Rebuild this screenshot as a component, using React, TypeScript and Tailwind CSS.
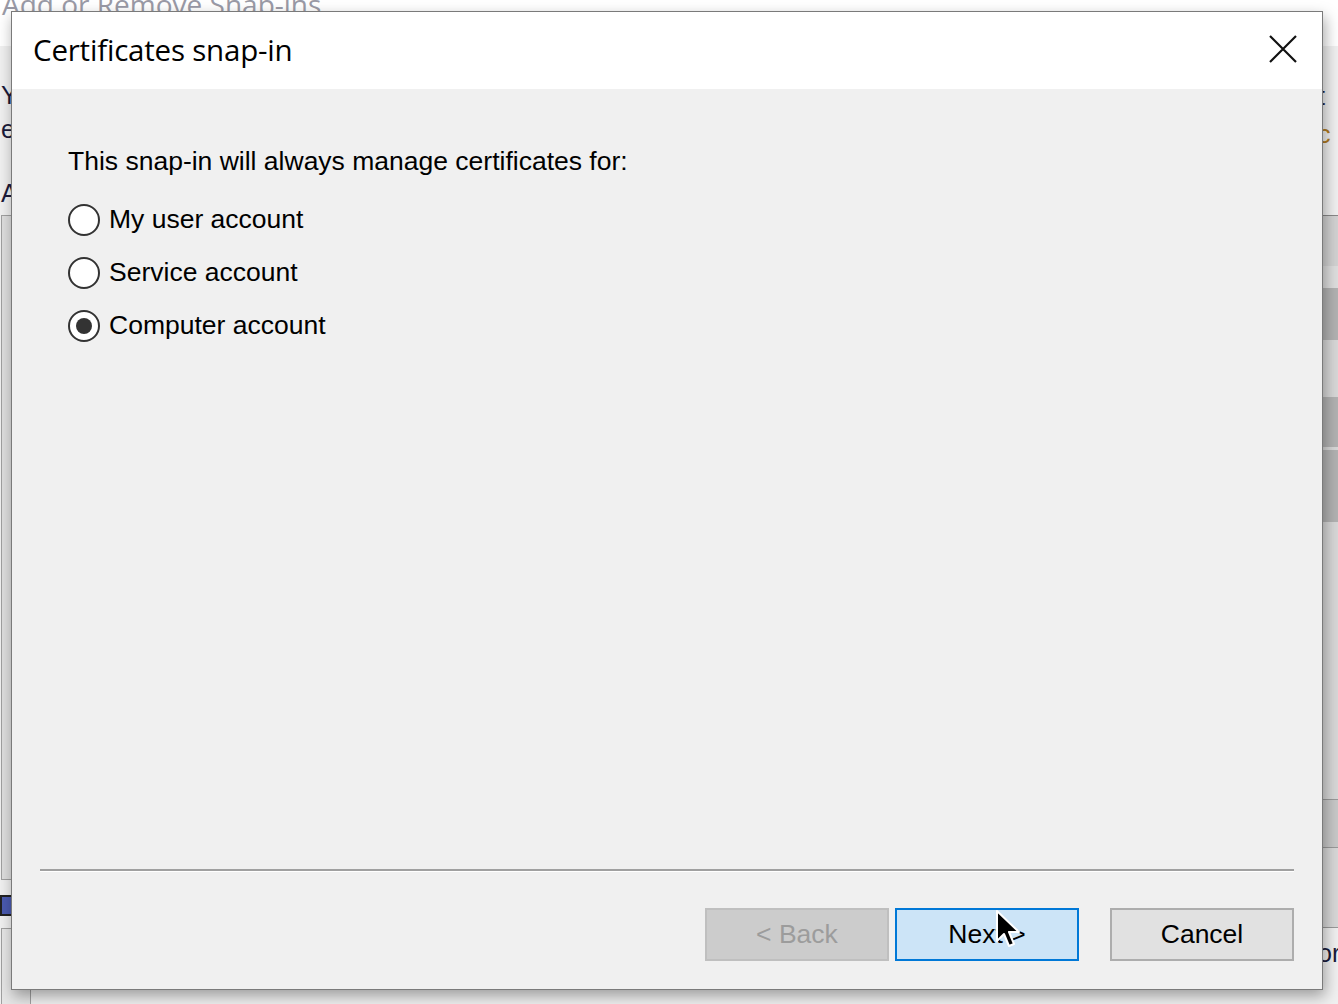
import React, { useState } from 'react';

const uiFont = { fontFamily: '"Liberation Sans", Arial, sans-serif' };
const titleFont = { fontFamily: '"Open Sans", "Noto Sans", sans-serif' };

type RadioProps = { label: string; checked: boolean; onSelect: () => void };

const Radio: React.FC<RadioProps> = ({ label, checked, onSelect }) => (
  <label className="flex items-center h-[53px] cursor-default" onClick={onSelect}>
    <span className="w-[32px] h-[32px] rounded-full border-2 border-[#333] bg-white flex items-center justify-center">
      {checked && <span className="w-[16px] h-[16px] rounded-full bg-[#333]" />}
    </span>
    <span className="ml-[9px] text-[26.5px] text-black">{label}</span>
  </label>
);

const App: React.FC = () => {
  const [choice, setChoice] = useState('computer');

  return (
    <div className="relative w-[1338px] h-[1004px] overflow-hidden bg-[#f0f0f0]" style={uiFont}>
      {/* Background window: Add or Remove Snap-ins */}
      <div className="absolute inset-0 flex flex-col">
        <div className="h-[46px] bg-white relative">
          <div className="absolute left-[2px] top-[-17px] text-[28px] text-[#9a9aa6]" style={titleFont}>
            Add or Remove Snap-ins
          </div>
        </div>
        <div className="flex-1 bg-[#f0f0f0]" />
      </div>
      <div className="absolute left-[1px] top-[78px] text-[25px] text-[#1a1a3a] leading-[34px]">
        <div>Y</div>
        <div>e</div>
      </div>
      <div className="absolute left-[1px] top-[175px] text-[25px] text-[#1a1a3a]">A</div>
      <div className="absolute left-[1px] top-[215px] w-[30px] h-[665px] border border-[#a0a0a0] bg-[#dedede]" />
      <div className="absolute left-[0px] top-[895px] w-[30px] h-[21px] border-2 border-[#222] bg-[#4a5ab0]" />
      <div className="absolute left-[1px] top-[928px] w-[30px] h-[80px] border border-[#a0a0a0] bg-[#e6e6e6]" />

      <div className="absolute left-[1318px] top-[78px] text-[25px] text-[#1a1a3a]">
        t <span className="text-[#b07a20]">c</span>
      </div>
      <div className="absolute left-[1318px] top-[215px] w-[40px] h-[713px] border-t border-[#888] flex flex-col">
        <div className="h-[50px] bg-[#d2d2d2]" />
        <div className="h-[22px] bg-[#dedede]" />
        <div className="h-[52px] bg-[#b2b2b2]" />
        <div className="h-[57px] bg-[#d8d8d8]" />
        <div className="h-[50px] bg-[#b2b2b2]" />
        <div className="h-[3px] bg-[#d8d8d8]" />
        <div className="h-[72px] bg-[#b2b2b2]" />
        <div className="h-[278px] bg-[#d8d8d8] border-b border-[#999]" />
        <div className="h-[48px] bg-[#c8c8c8] border-b border-[#999]" />
        <div className="flex-1 bg-[#d8d8d8] border-b border-[#999]" />
      </div>
      <div className="absolute left-[1318px] top-[935px] text-[25px] text-[#1a1a3a]">or</div>

      {/* Dialog */}
      <div className="absolute left-[11px] top-[11px] w-[1312px] h-[979px] border border-[#7a7a7a] flex flex-col shadow-[2px_6px_14px_rgba(0,0,0,0.35)]">
        <div className="h-[77px] bg-white flex items-center justify-between pl-[21px] pr-[25px]">
          <span className="text-[29.5px] text-black tracking-[-0.2px]" style={titleFont}>
            Certificates snap-in
          </span>
          <svg width="28" height="28" viewBox="0 0 28 28" className="mt-[-4px]">
            <path d="M1 1 L27 27 M27 1 L1 27" stroke="#111" strokeWidth="2.2" fill="none" />
          </svg>
        </div>

        <div className="flex-1 bg-[#f0f0f0] flex flex-col px-[28px] pb-[28px]">
          <div className="flex-1 flex flex-col pl-[28px] pt-[56px]">
            <div className="text-[26.5px] text-black leading-[32px] mb-[16px]">
              This snap-in will always manage certificates for:
            </div>
            <Radio label="My user account" checked={choice === 'user'} onSelect={() => setChoice('user')} />
            <Radio label="Service account" checked={choice === 'service'} onSelect={() => setChoice('service')} />
            <Radio label="Computer account" checked={choice === 'computer'} onSelect={() => setChoice('computer')} />
          </div>

          <div className="h-[2px] bg-[#a0a0a0] border-b border-white box-content" />

          <div className="flex justify-end mt-[36px]">
            <button className="w-[184px] h-[53px] bg-[#cccccc] border-2 border-[#bfbfbf] text-[26.5px] text-[#9c9c9c]">
              &lt; Back
            </button>
            <button className="relative w-[184px] h-[53px] ml-[6px] bg-[#cce4f7] border-2 border-[#0078d7] text-[26.5px] text-black">
              Next &gt;
              <svg className="absolute left-[98px] top-[-1px]" width="26" height="40" viewBox="0 0 13 20">
                <path d="M1 1 L1 16 L4.5 12.5 L7 18.5 L9.5 17.5 L7 11.5 L12 11.5 Z" fill="#000" stroke="#fff" strokeWidth="1" strokeLinejoin="round" />
              </svg>
            </button>
            <button className="w-[184px] h-[53px] ml-[31px] bg-[#e1e1e1] border-2 border-[#adadad] text-[26.5px] text-black">
              Cancel
            </button>
          </div>
        </div>
      </div>
    </div>
  );
};

export default App;
